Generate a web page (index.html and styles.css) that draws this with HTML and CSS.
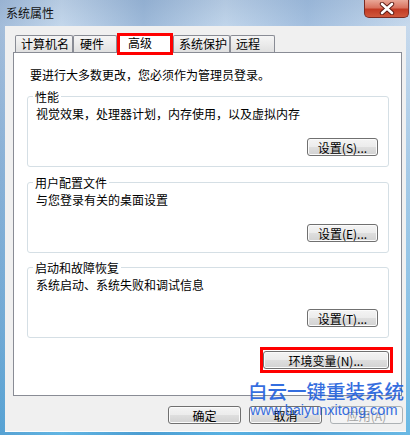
FILE: index.html
```html
<!DOCTYPE html>
<html lang="zh-CN">
<head>
<meta charset="utf-8">
<title>系统属性</title>
<link rel="stylesheet" href="styles.css">
</head>
<body>
<div class="window">
  <div class="titlebar">
    <span class="title">系统属性</span>
    <div class="close">
      <svg width="20" height="13" viewBox="0 0 20 13">
        <path d="M5 2 L15 11 M15 2 L5 11" stroke="#5a1a12" stroke-width="4.4" stroke-linecap="round"/>
        <path d="M5 2 L15 11 M15 2 L5 11" stroke="#ffffff" stroke-width="2.6" stroke-linecap="round"/>
      </svg>
    </div>
  </div>
  <div class="client">
    <div class="tabs">
      <div class="tab t1">计算机名</div>
      <div class="tab t2">硬件</div>
      <div class="tab active">高级</div>
      <div class="tab t4">系统保护</div>
      <div class="tab t5">远程</div>
    </div>
    <div class="panel">
      <div class="intro">要进行大多数更改，您必须作为管理员登录。</div>
      <div class="group">
        <span class="legend">性能</span>
        <div class="desc">视觉效果，处理器计划，内存使用，以及虚拟内存</div>
        <button class="btn small">设置(S)...</button>
      </div>
      <div class="group g2">
        <span class="legend">用户配置文件</span>
        <div class="desc">与您登录有关的桌面设置</div>
        <button class="btn small">设置(E)...</button>
      </div>
      <div class="group g3">
        <span class="legend">启动和故障恢复</span>
        <div class="desc">系统启动、系统失败和调试信息</div>
        <button class="btn small">设置(T)...</button>
      </div>
      <div class="env-wrap">
        <button class="btn env">环境变量(N)...</button>
      </div>
    </div>
    <div class="actions">
      <button class="btn dlg">确定</button>
      <button class="btn dlg">取消</button>
      <button class="btn dlg disabled">应用(A)</button>
    </div>
  </div>
  <div class="watermark">
    <div class="wm-cn">白云一键重装系统</div>
    <div class="wm-url">www.baiyunxitong.com</div>
  </div>
</div>
</body>
</html>
```

FILE: styles.css
```css
html, body {
  margin: 0;
  padding: 0;
}
body {
  width: 410px;
  height: 435px;
  overflow: hidden;
  font-family: "Noto Sans CJK SC", "Liberation Sans", sans-serif;
  font-size: 12px;
  color: #000;
}
.window {
  position: relative;
  height: 435px;
  box-sizing: border-box;
  padding: 0 4px 3px 5px;
  display: flex;
  flex-direction: column;
  background:
    linear-gradient(90deg, rgba(120,150,190,0.35) 0%, rgba(255,255,255,0.15) 15%, rgba(90,130,180,0.3) 35%, rgba(255,255,255,0.1) 55%, rgba(110,150,200,0.3) 75%, rgba(255,255,255,0.2) 100%),
    linear-gradient(180deg, #a9c1dc 0%, #b9d0e8 6%, #8fbde2 40%, #6db3e0 75%, #45a8de 100%);
}
.titlebar {
  height: 26px;
  display: flex;
  align-items: flex-start;
}
.title {
  padding: 5px 0 0 1px;
  line-height: 16px;
  font-size: 12px;
  color: #111;
}
.close {
  margin-left: auto;
  margin-right: -3px;
  width: 45px;
  height: 18px;
  box-sizing: border-box;
  border: 1px solid #7a2b22;
  border-top: none;
  border-radius: 0 0 5px 5px;
  background: linear-gradient(180deg, #e9a797 0%, #d9735f 45%, #c23b24 55%, #d0583c 100%);
  display: flex;
  align-items: center;
  justify-content: center;
}
.client {
  flex: 1;
  background: #f0f0f0;
  display: flex;
  flex-direction: column;
  padding: 7px 4px 0 8px;
  border-bottom: 1px solid #fdfdfd;
}
.tabs {
  display: flex;
  align-items: flex-end;
  height: 19px;
  padding-left: 2px;
  position: relative;
  z-index: 2;
}
.tab {
  height: 17px;
  box-sizing: border-box;
  border: 1px solid #898c95;
  border-bottom: none;
  border-radius: 2px 2px 0 0;
  background: linear-gradient(180deg, #f5f5f5 0%, #ebebeb 50%, #e0e0e0 100%);
  line-height: 15px;
  padding-left: 5px;
  white-space: nowrap;
}
.t1 { width: 58px; }
.t2 { width: 44px; }
.t4 { width: 57px; }
.t5 { width: 45px; }
.tab.t2 { padding-left: 6px; }
.tab.active {
  width: 56px;
  height: 22px;
  margin-bottom: -3px;
  border: 3px solid #ff0000;
  border-radius: 0;
  background: #fff;
  line-height: 14px;
  padding-left: 8px;
}
.panel {
  height: 344px;
  box-sizing: border-box;
  border: 1px solid #898c95;
  background: #fff;
  padding: 15px 12px 0 13px;
  display: flex;
  flex-direction: column;
}
.intro {
  line-height: 14px;
  margin-left: 3px;
}
.group {
  margin-top: 14px;
  border: 1px solid #d5dfe5;
  border-radius: 3px;
  padding: 0 10px 10px 0;
  display: flex;
  flex-direction: column;
}
.group.g2 { margin-top: 15px; }
.group.g3 { margin-top: 14px; }
.legend {
  align-self: flex-start;
  margin: -7px 0 0 5px;
  padding: 0 2px;
  background: #fff;
  line-height: 14px;
}
.desc {
  margin: 3px 0 0 8px;
  line-height: 14px;
}
.btn {
  font-family: "Noto Sans CJK SC", "Liberation Sans", sans-serif;
  font-size: 12px;
  color: #000;
  height: 18px;
  box-sizing: border-box;
  padding: 0;
  line-height: 15px;
  border: 1px solid #707070;
  border-radius: 3px;
  background: linear-gradient(180deg, #f4f4f4 0%, #ececec 48%, #dedede 52%, #d2d2d2 100%);
  box-shadow: inset 0 0 0 1px #fbfbfb;
  white-space: nowrap;
}
.btn.small {
  align-self: flex-end;
  width: 71px;
  margin-top: 17px;
}
.env-wrap {
  align-self: flex-end;
  margin: 9px -4px 0 0;
  border: 3px solid #ff0000;
  padding: 1px 1px 1px 0;
  display: flex;
}
.btn.env {
  width: 126px;
}
.actions {
  display: flex;
  justify-content: flex-end;
  gap: 8px;
  margin-top: 10px;
  margin-right: -1px;
}
.btn.dlg {
  width: 73px;
}
.btn.disabled {
  color: #a3a3a3;
  border-color: #adb2b5;
  background: #f4f4f4;
  box-shadow: none;
}
.watermark {
  position: absolute;
  left: 248px;
  top: 380px;
  color: #1f5fdc;
  opacity: 0.9;
  pointer-events: none;
}
.wm-cn {
  font-size: 19.5px;
  line-height: 22px;
  font-weight: 500;
  white-space: nowrap;
}
.wm-url {
  font-family: "Liberation Sans", sans-serif;
  font-size: 14.5px;
  line-height: 16px;
  margin-left: 2px;
  white-space: nowrap;
}
```
